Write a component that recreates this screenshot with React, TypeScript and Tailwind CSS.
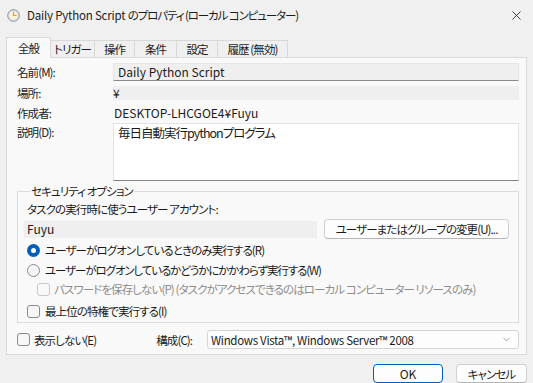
import { ChevronDown, X } from 'lucide-react';

const tabs = ['全般', 'トリガー', '操作', '条件', '設定', '履歴 (無効)'];
const tabWidths = ['w-[45px]', 'w-[44px]', 'w-[40px]', 'w-[42px]', 'w-[41px]', 'w-[70px]'];

// Latin-only strings keep the normal width; Japanese text is tightened to match Yu Gothic UI
const latin = 'text-[12px] tracking-normal';

function ClockIcon() {
  return (
    <svg width="13" height="13" viewBox="0 0 13 13">
      <circle cx="6.5" cy="6.5" r="5.8" fill="#dfe3e8" stroke="#8a9099" strokeWidth="1" />
      <circle cx="6.5" cy="6.5" r="4.3" fill="#fbf3d9" />
      <path d="M6.5 3.2 V6.5 H9.2" fill="none" stroke="#e2a028" strokeWidth="1.2" strokeLinecap="round" />
    </svg>
  );
}

function Radio({ checked }: { checked?: boolean }) {
  if (checked) {
    return (
      <span className="w-[13px] h-[13px] rounded-full bg-[#005fb8] flex items-center justify-center shrink-0">
        <span className="w-[5px] h-[5px] rounded-full bg-white" />
      </span>
    );
  }
  return <span className="w-[13px] h-[13px] rounded-full border border-[#8a8a8a] bg-[#f5f5f5] shrink-0" />;
}

function Check({ disabled }: { disabled?: boolean }) {
  return (
    <span
      className={`w-[13px] h-[13px] rounded-[3px] border shrink-0 ${
        disabled ? 'border-[#c8c8c8] bg-[#f9f9f9]' : 'border-[#8a8a8a] bg-[#f7f7f7]'
      }`}
    />
  );
}

export default function App() {
  return (
    <div className="w-[533px] h-[383px] overflow-hidden bg-[#f0f0f0] text-[11.5px] tracking-[-0.9px] leading-[16px] whitespace-nowrap text-[#1b1b1b] font-['Noto_Sans_CJK_JP','Noto_Sans',sans-serif] [font-feature-settings:'palt'] flex flex-col">
      {/* Title bar */}
      <div className="h-[30px] shrink-0 flex items-center pl-[7px] pr-[9px]">
        <ClockIcon />
        <span className="ml-[7px]">
          <span className="text-[11.5px] tracking-[-0.2px]">Daily Python Script </span>
          <span className="tracking-[-1.1px]">のプロパティ (ローカル コンピューター)</span>
        </span>
        <X size={15} strokeWidth={1.3} className="ml-auto text-[#1b1b1b]" />
      </div>

      {/* Tabs */}
      <div className="mt-[7px] h-[20px] shrink-0 flex items-end px-[6px] relative z-10">
        {tabs.map((t, i) =>
          i === 0 ? (
            <div
              key={t}
              className={`${tabWidths[i]} h-[21px] -mb-px bg-[#f9f9f9] border border-b-0 border-[#d9d9d9] flex items-center justify-center`}
            >
              {t}
            </div>
          ) : (
            <div
              key={t}
              className={`${tabWidths[i]} h-[17px] border-t border-r border-[#d9d9d9] flex items-center justify-center`}
            >
              {t}
            </div>
          )
        )}
      </div>

      {/* Panel */}
      <div className="mx-[6px] h-[298px] shrink-0 border border-[#dadada] bg-[#f9f9f9] pl-[10px] pr-[7px] flex flex-col">
        <div className="mt-[5px] h-[18px] flex items-center">
          <span className="w-[96px]">名前(M):</span>
          <div className={`flex-1 h-[18px] bg-[#efefef] border border-[#e6e6e6] border-b-[#8a8a8a] flex items-center px-[4px] ${latin}`}>
            Daily Python Script
          </div>
        </div>
        <div className="mt-[5px] h-[14px] flex items-center">
          <span className="w-[96px]">場所:</span>
          <div className={`flex-1 h-[14px] bg-[#efefef] flex items-center ${latin}`}>¥</div>
        </div>
        <div className="mt-[5px] h-[16px] flex items-center">
          <span className="w-[96px]">作成者:</span>
          <span className={`pl-px ${latin}`}>DESKTOP-LHCGOE4¥Fuyu</span>
        </div>
        <div className="mt-[2px] h-[58px] flex">
          <span className="w-[96px] pt-[1px]">説明(D):</span>
          <div className="flex-1 bg-white border border-[#e3e3e3] border-b-[#868686] px-[4px] pt-[1px] text-[12.5px] tracking-[-1px]">
            毎日自動実行pythonプログラム
          </div>
        </div>

        {/* Security options */}
        <fieldset className="mt-[2px] h-[140px] border border-[#dcdcdc] pl-[6px] pr-[9px] flex flex-col">
          <legend className="ml-[6px] px-[1px]">セキュリティ オプション</legend>
          <div className="mt-[2px] h-[16px] pl-[3px] flex items-center">タスクの実行時に使うユーザー アカウント:</div>
          <div className="mt-[2px] h-[20px] flex items-center">
            <div className={`w-[293px] h-[17px] bg-[#efefef] pl-[3px] flex items-center ${latin}`}>Fuyu</div>
            <button className="ml-auto w-[185px] h-[20px] rounded-[4px] border border-[#d0d0d0] border-b-[#b5b5b5] bg-[#fdfdfd] flex items-center justify-center">
              ユーザーまたはグループの変更(U)...
            </button>
          </div>
          <div className="mt-[2px] h-[18px] pl-[3px] flex items-center gap-[5px]">
            <Radio checked />
            <span>ユーザーがログオンしているときのみ実行する(R)</span>
          </div>
          <div className="mt-[2px] h-[18px] pl-[3px] flex items-center gap-[5px]">
            <Radio />
            <span className="tracking-[-1.1px]">ユーザーがログオンしているかどうかにかかわらず実行する(W)</span>
          </div>
          <div className="mt-[1px] h-[18px] pl-[13px] flex items-center gap-[4px] text-[#8d8d8d]">
            <Check disabled />
            <span>パスワードを保存しない(P) (タスクがアクセスできるのはローカル コンピューター リソースのみ)</span>
          </div>
          <div className="mt-[4px] h-[18px] pl-[3px] flex items-center gap-[5px]">
            <Check />
            <span>最上位の特権で実行する(I)</span>
          </div>
        </fieldset>

        {/* Bottom row */}
        <div className="mt-[7px] h-[19px] flex items-center">
          <Check />
          <span className="ml-[4px]">表示しない(E)</span>
          <span className="ml-[60px]">構成(C):</span>
          <div className="ml-auto w-[312px] h-[19px] rounded-[3px] border border-[#d5d5d5] bg-[#fdfdfd] flex items-center pl-[3px] pr-[6px]">
            <span className="text-[11.5px] tracking-[-0.3px]">Windows Vista™, Windows Server™ 2008</span>
            <ChevronDown size={11} strokeWidth={1.3} className="ml-auto text-[#707070]" />
          </div>
        </div>
      </div>

      {/* Dialog buttons */}
      <div className="mt-[9px] mx-[6px] flex justify-end gap-[13px]">
        <button className={`w-[70px] h-[19px] rounded-[4px] border border-[#005fb8] bg-[#fdfdfd] flex items-center justify-center ${latin}`}>
          OK
        </button>
        <button className="w-[71px] h-[19px] rounded-[4px] border border-[#d0d0d0] border-b-[#b5b5b5] bg-[#fdfdfd] flex items-center justify-center">
          キャンセル
        </button>
      </div>
    </div>
  );
}
